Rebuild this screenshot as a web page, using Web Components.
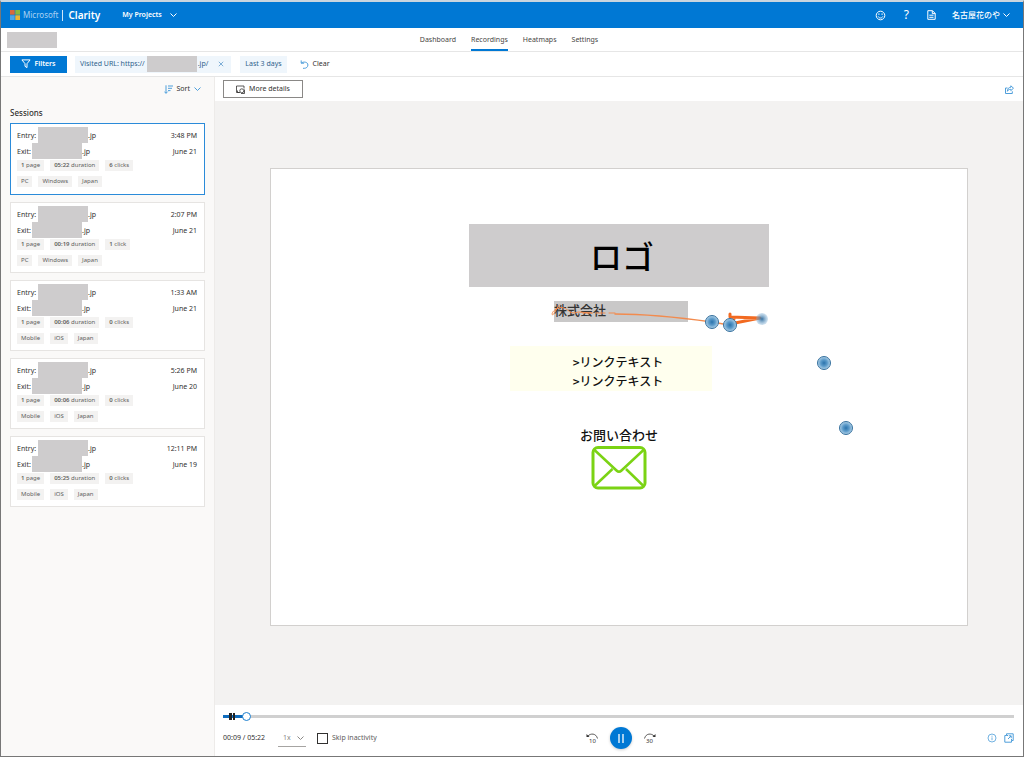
<!DOCTYPE html>
<html lang="en">
<head>
<meta charset="utf-8">
<title>Microsoft Clarity - Recordings</title>
<style>
html, body { margin: 0; }
body { font-family: "Noto Sans", "Noto Sans CJK JP", sans-serif; font-size: 7px; line-height: 12px; color: #323130; background: #fff; }
</style>
</head>
<body>
<clarity-app></clarity-app>
<script>
const BASE = `<style>
:host, * { box-sizing: border-box; }
button, select, input { font: inherit; color: inherit; margin: 0; padding: 0; border: 0; background: none; border-radius: 0; }
a { color: inherit; text-decoration: none; }
svg { display: block; flex: none; fill: none; stroke: currentColor; }
.mask { display: inline-block; background: #cecccd; }
</style>`;

function define(name, html, setup) {
  const template = document.createElement('template');
  template.innerHTML = BASE + html;
  customElements.define(name, class extends HTMLElement {
    connectedCallback() {
      if (this.shadowRoot) return;
      this.attachShadow({ mode: 'open' }).append(template.content.cloneNode(true));
      if (setup) setup(this, this.shadowRoot);
    }
  });
}

const CHEVRON = `<svg width="7" height="4" viewBox="0 0 7 4"><path d="M.5.5l3 3 3-3"/></svg>`;

define('clarity-header', `<style>
:host { display: flex; align-items: center; height: 26px; padding: 0 13px 0 9px; background: #0078d4; color: #fff; }
.brand { display: flex; align-items: center; font-size: 8px; }
.brand svg { margin-right: 3px; stroke: none; }
.ms { color: #a8d2f3; }
.bar { width: 1px; height: 11px; margin: 0 5px 0 4px; background: #cfe6f8; }
.name { font-size: 10px; font-weight: 600; }
button { display: flex; align-items: center; gap: 8px; cursor: pointer; }
.projects { margin-left: 22px; font-weight: 600; }
.tools { display: flex; align-items: center; margin-left: auto; gap: 16px; }
.account { gap: 3px; font-family: "Noto Sans CJK JP", sans-serif; font-size: 8px; font-weight: 500; }
.help { font-size: 12px; margin: 0 2px; }
</style>
<a class="brand" href="#home">
  <svg width="10" height="10" viewBox="0 0 10 10"><path fill="#d9693c" d="M0 0h4.7v4.7H0z"/><path fill="#8cb83c" d="M5.3 0H10v4.7H5.3z"/><path fill="#4ea6e6" d="M0 5.3h4.7V10H0z"/><path fill="#edb634" d="M5.3 5.3H10V10H5.3z"/></svg>
  <span class="ms">Microsoft</span><span class="bar"></span><span class="name">Clarity</span>
</a>
<button class="projects">My Projects ${CHEVRON}</button>
<div class="tools">
  <button aria-label="Feedback"><svg width="11" height="11" viewBox="0 0 11 11"><circle cx="5.5" cy="5.5" r="4.3"/><path d="M3.2 6.5c.9 2 3.7 2 4.6 0"/><path fill="currentColor" stroke="none" d="M3.3 3.6h1.2v1.2H3.3zM6.5 3.6h1.2v1.2H6.5z"/></svg></button>
  <button class="help" aria-label="Help">?</button>
  <button aria-label="Documentation"><svg width="9" height="10" viewBox="0 0 9 10"><path d="M.8.7h4.7l2.7 2.7v5.9H.8zM5.3.7v2.9h2.9M2.3 5.2h4.2M2.3 7.3h4.2"/></svg></button>
  <button class="account">名古屋花のや ${CHEVRON}</button>
</div>`);

define('clarity-nav', `<style>
:host { display: grid; grid-template-columns: 1fr auto 1fr; align-items: stretch; height: 24px; padding: 0 12px 0 6px; border-bottom: 1px solid #e6e6e6; color: #484644; }
.mask { width: 50px; height: 16px; align-self: center; }
nav { display: flex; gap: 15px; }
a { display: flex; align-items: center; border-bottom: 2px solid transparent; border-top: 2px solid transparent; }
a[aria-current] { border-bottom-color: #0078d4; }
</style>
<span class="mask"></span>
<nav><a href="#dashboard">Dashboard</a><a href="#recordings" aria-current="page">Recordings</a><a href="#heatmaps">Heatmaps</a><a href="#settings">Settings</a></nav>`);

define('clarity-filters', `<style>
:host { display: flex; align-items: center; height: 25px; padding: 0 9px; border-bottom: 1px solid #e6e6e6; }
button { display: flex; align-items: center; cursor: pointer; }
.filters { width: 57px; height: 17px; justify-content: center; gap: 3px; margin-right: 8px; background: #0078d4; color: #fff; font-weight: 600; }
.chip { display: flex; align-items: center; height: 17px; padding: 0 5px; background: #eff6fc; color: #30628c; }
.chip .mask { width: 50px; height: 16px; margin: 0 1px 0 2px; }
.chip button { margin: 0 2px 0 10px; color: #5f9ccb; }
.days { margin-left: 9px; }
.clear { margin-left: 13px; gap: 4px; }
.clear svg { color: #4f9fdb; }
</style>
<button class="filters"><svg width="10" height="10" viewBox="0 0 10 10"><path d="M.9.9h8.2L6 4.7v3.9L4 7.3V4.7z"/></svg>Filters</button>
<span class="chip">Visited URL: https://<span class="mask"></span>.jp/<button aria-label="Remove filter"><svg width="6" height="6" viewBox="0 0 6 6" stroke-width=".8"><path d="M.8.8l4.4 4.4M5.2.8L.8 5.2"/></svg></button></span>
<span class="chip days">Last 3 days</span>
<button class="clear"><svg width="9" height="9" viewBox="0 0 9 9"><path d="M1.2.4v2.8h2.9M1.3 3.1c2-1.7 6.600-1.400 6.600 1.900 0 2-1.600 3.300-3.600 3.300H3"/></svg>Clear</button>`);

define('session-card', `<style>
:host { display: block; min-height: 71px; padding: 3px 7px 5px 6px; border: 1px solid #e6e4e2; background: #fff; color: #323130; }
:host([selected]) { min-height: 72px; border-color: #2b8bd9; }
.row { display: flex; align-items: flex-end; height: 16px; line-height: 14px; }
.row .mask { width: 50px; height: 16px; }
.row .label { width: 21px; }
.row .exit { width: 15px; }
.row time { margin-left: auto; }
.tags { display: flex; gap: 6px; margin-top: 1px; font-size: 6px; line-height: 11px; color: #605e5c; }
.tags + .tags { margin-top: 5px; }
.tags span { padding: 0 4px; background: #f3f2f1; }
b { font-weight: 600; }
</style>
<div class="row"><span class="label">Entry:</span><span class="mask"></span>.jp<time class="time"></time></div>
<div class="row"><span class="label exit">Exit:</span><span class="mask"></span>.jp<time class="date"></time></div>
<div class="tags"><span><b>1</b> page</span><span><b class="dur"></b> duration</span><span class="clicks"></span></div>
<div class="tags"><span class="device"></span><span class="os"></span><span>Japan</span></div>`,
(host, root) => {
  for (const key of ['time', 'date', 'dur', 'device', 'os']) root.querySelector('.' + key).textContent = host.getAttribute(key);
  const [count, word] = host.getAttribute('clicks').split(' ');
  const b = document.createElement('b');
  b.textContent = count;
  root.querySelector('.clicks').append(b, ' ' + word);
});

define('session-list', `<style>
:host { display: block; padding: 0 9px; background: #faf9f8; }
.sort { display: flex; align-items: center; gap: 4px; height: 24px; margin-left: auto; padding-right: 4px; }
.sort svg { color: #4f9fdb; }
h2 { margin: 6px 0 4px; font-size: 8px; line-height: 12px; font-weight: 500; }
.cards { display: flex; flex-direction: column; gap: 7px; }
</style>
<button class="sort"><svg width="9" height="9" viewBox="0 0 9 9"><path d="M2 .3v8M.3 6.6L2 8.3l1.700-1.700M4 1h5M4 3.300h4M4 5.600h2.500"/></svg>Sort ${CHEVRON}</button>
<h2>Sessions</h2>
<div class="cards"><slot></slot></div>`);

define('viewer-toolbar', `<style>
:host { display: flex; align-items: center; justify-content: space-between; height: 24px; padding: 0 9px 0 8px; }
.more { display: flex; align-items: center; justify-content: center; gap: 4px; width: 80px; height: 18px; border: 1px solid #8a8886; }
.share { color: #4f9fdb; }
</style>
<button class="more"><svg width="9" height="9" viewBox="0 0 9 9" stroke-width=".8"><path d="M4 7.500H.5V1H8v2.500M1.500 5.500v2h2"/><circle cx="5.800" cy="5.800" r="2"/><path d="M5 8.500h3.500v-4"/></svg>More details</button>
<button class="share" aria-label="Share"><svg width="9" height="9" viewBox="0 0 9 9"><path d="M2.500 3H.5v5.500h6.800V6.300M5.800.8l2.700 2.400-2.700 2.400V4.300c-1.700 0-2.700.6-3.400 2 0-2.500 1.200-3.900 3.400-4z"/></svg></button>`);

define('recorded-page', `<style>
:host { display: block; position: relative; min-height: 458px; padding-top: 55px; border: 1px solid #d2d0ce; background: #fff; color: #111; font-family: "Noto Sans CJK JP", sans-serif; }
.content { display: flex; flex-direction: column; align-items: center; }
h1 { width: 300px; margin: 0; padding-left: 6px; background: #cecccd; font-size: 32px; line-height: 63px; font-weight: 500; text-align: center; color: #000; }
.company { width: 134px; margin: 14px 0 24px 4px; padding-bottom: 3px; background: #c9c8c8; font-size: 13px; line-height: 18px; font-weight: 500; color: #333; }
.links { display: flex; flex-direction: column; align-items: center; width: 202px; margin: 0 16px 34px 0; padding: 6px 0 1px; background: #ffffee; font-size: 12px; line-height: 19px; font-weight: 500; }
.links a { padding-left: 14px; }
.mail { display: flex; flex-direction: column; align-items: center; gap: 2px; font-size: 13px; line-height: 19px; font-weight: 500; }
.mail svg { color: #7bd314; }
.trail { position: absolute; inset: 0; width: 100%; height: auto; pointer-events: none; stroke: none; }
.path { fill: none; stroke: #f28b4e; stroke-linecap: round; stroke-linejoin: round; }
</style>
<div class="content">
  <h1>ロゴ</h1>
  <div class="company">株式会社</div>
  <div class="links"><a href="#link-1">&gt;リンクテキスト</a><a href="#link-2">&gt;リンクテキスト</a></div>
  <a class="mail" href="#contact">お問い合わせ
    <svg width="56" height="44" viewBox="0 0 56 44" stroke-width="3"><rect x="2" y="1.500" width="52" height="40.500" rx="5"/><path stroke-width="2.500" d="M3.500 4l22 20.500q2.500 2.500 5 0L52.500 4M3.500 40l18-17M52.500 40L35 23"/></svg>
  </a>
</div>
<svg class="trail" viewBox="0 0 696 456">
  <defs>
    <radialGradient id="tap"><stop offset="0" stop-color="#2b73ac"/><stop offset=".5" stop-color="#5c9bca"/><stop offset="1" stop-color="#b4d3e9"/></radialGradient>
    <radialGradient id="glow"><stop offset="0" stop-color="#38719f"/><stop offset="1" stop-color="#7fb0d6" stop-opacity=".35"/></radialGradient>
  </defs>
  <g class="path">
    <path stroke-width="1" d="M288 136l-4 7c-3 6-5 1 1-3 12-6 12 8 22 3l14 1"/>
    <path stroke-width="1" stroke-dasharray="9 4" d="M312 144l32 0"/>
    <path stroke-width="1.500" d="M344 145q40 0 97 8l17 3"/>
    <path stroke="#f26a21" stroke-width="3" d="M459 145v3l30 1-30 6 4-5"/>
  </g>
  <g fill="url(#tap)" stroke="#37719e" stroke-width="1">
    <circle cx="441" cy="153" r="6.500"/><circle cx="459" cy="156" r="6.500"/><circle cx="553" cy="194" r="6.500"/><circle cx="575" cy="259" r="6.500"/>
  </g>
  <circle cx="491" cy="150" r="6" fill="url(#glow)"/>
</svg>`);

define('player-bar', `<style>
:host { display: block; padding: 6px 9px 7px 8px; background: #fff; }
.seek { display: block; appearance: none; width: 100%; height: 10px; cursor: pointer; background: linear-gradient(90deg, transparent 6px, #222 6px 9px, transparent 9px 10px, #222 10px 12px) 0 50% / 12px 7px no-repeat; }
.seek::-webkit-slider-runnable-track { height: 3px; background: linear-gradient(90deg, #0f6cbd 6px, #222 6px 9px, #0f6cbd 9px 10px, #222 10px 12px, #0f6cbd 12px 24px, #d0d0d0 24px); }
.seek::-webkit-slider-thumb { appearance: none; width: 9px; height: 9px; margin-top: -3px; border: 1px solid #1b7fcf; border-radius: 50%; background: #fff; }
.controls { display: grid; grid-template-columns: 1fr auto 1fr; align-items: center; margin-top: 6px; }
.left, .center, .right { display: flex; align-items: center; }
.speed { position: relative; width: 28px; margin: 0 11px 0 13px; border-bottom: 1px solid #a6a4a2; color: #8a8886; }
.speed select { appearance: none; width: 100%; height: 16px; padding-left: 5px; }
.speed svg { position: absolute; right: 2px; top: 6px; pointer-events: none; }
label { display: flex; align-items: center; gap: 4px; color: #605e5c; }
label input { appearance: none; width: 11px; height: 11px; border: 1px solid #323130; }
.center { gap: 11px; margin-left: 5px; }
.play { display: grid; place-items: center; width: 22px; height: 22px; border-radius: 50%; background: #0078d4; color: #fff; box-shadow: 0 1px 3px #0003; }
.skip { position: relative; width: 13px; height: 14px; font-size: 6px; line-height: 8px; padding-top: 6px; }
.skip svg { position: absolute; left: 0; top: 2px; }
.right { justify-content: flex-end; gap: 7px; color: #4f9fdb; }
</style>
<input class="seek" type="range" min="0" max="322" value="8" aria-label="Seek">
<div class="controls">
  <div class="left"><span>00:09 / 05:22</span>
    <span class="speed"><select aria-label="Playback speed"><option>1x</option><option>2x</option></select>${CHEVRON}</span>
    <label><input type="checkbox">Skip inactivity</label></div>
  <div class="center">
    <button class="skip" aria-label="Back 10 seconds"><svg width="13" height="7" viewBox="0 0 13 7" stroke-width=".8"><path d="M2 3C4.500.2 10 0 11.500 5.500"/><path fill="currentColor" stroke="none" d="M.5 1v3h3z"/></svg>10</button>
    <button class="play" aria-label="Pause"><svg width="8" height="9" viewBox="0 0 8 9" stroke-width="1.300"><path d="M2 0v9M6 0v9"/></svg></button>
    <button class="skip" aria-label="Forward 30 seconds"><svg width="13" height="7" viewBox="0 0 13 7" stroke-width=".8"><path d="M11 3C8.500.2 3 0 1.500 5.500"/><path fill="currentColor" stroke="none" d="M12.500 1v3h-3z"/></svg>30</button>
  </div>
  <div class="right">
    <button aria-label="Information"><svg width="10" height="10" viewBox="0 0 10 10" stroke-width=".8"><circle cx="5" cy="5" r="4"/><path d="M5 4.400v2.800M5 2.700v1"/></svg></button>
    <button aria-label="Open in new window"><svg width="10" height="10" viewBox="0 0 10 10"><path d="M2.500 2.500V.8h6.700v6.700H7.500M2.500 2.500H.8v6.700h6.700V7.500M2.500 2.500h1.500M7.500 7.500V6M4 6l3-3M4.800 2.800h2.400v2.400"/></svg></button>
  </div>
</div>`);

define('clarity-app', `<style>
:host { display: flex; flex-direction: column; min-height: 100vh; border: 1px solid #777; border-top: 2px solid #c9d5df; }
main { flex: 1; display: grid; grid-template-columns: 213px 1fr; }
.viewer { display: flex; flex-direction: column; min-width: 0; border-left: 1px solid #edebe9; }
.stage { flex: 1; display: flex; align-items: center; padding: 12px 55px 24px; background: #f3f2f1; }
recorded-page { flex: 1; }
</style>
<clarity-header></clarity-header>
<clarity-nav></clarity-nav>
<clarity-filters></clarity-filters>
<main>
  <session-list>
    <session-card selected time="3:48 PM" date="June 21" dur="05:22" clicks="6 clicks" device="PC" os="Windows"></session-card>
    <session-card time="2:07 PM" date="June 21" dur="00:19" clicks="1 click" device="PC" os="Windows"></session-card>
    <session-card time="1:33 AM" date="June 21" dur="00:06" clicks="0 clicks" device="Mobile" os="iOS"></session-card>
    <session-card time="5:26 PM" date="June 20" dur="00:06" clicks="0 clicks" device="Mobile" os="iOS"></session-card>
    <session-card time="12:11 PM" date="June 19" dur="05:25" clicks="0 clicks" device="Mobile" os="iOS"></session-card>
  </session-list>
  <section class="viewer">
    <viewer-toolbar></viewer-toolbar>
    <div class="stage"><recorded-page></recorded-page></div>
    <player-bar></player-bar>
  </section>
</main>`);
</script>
</body>
</html>
